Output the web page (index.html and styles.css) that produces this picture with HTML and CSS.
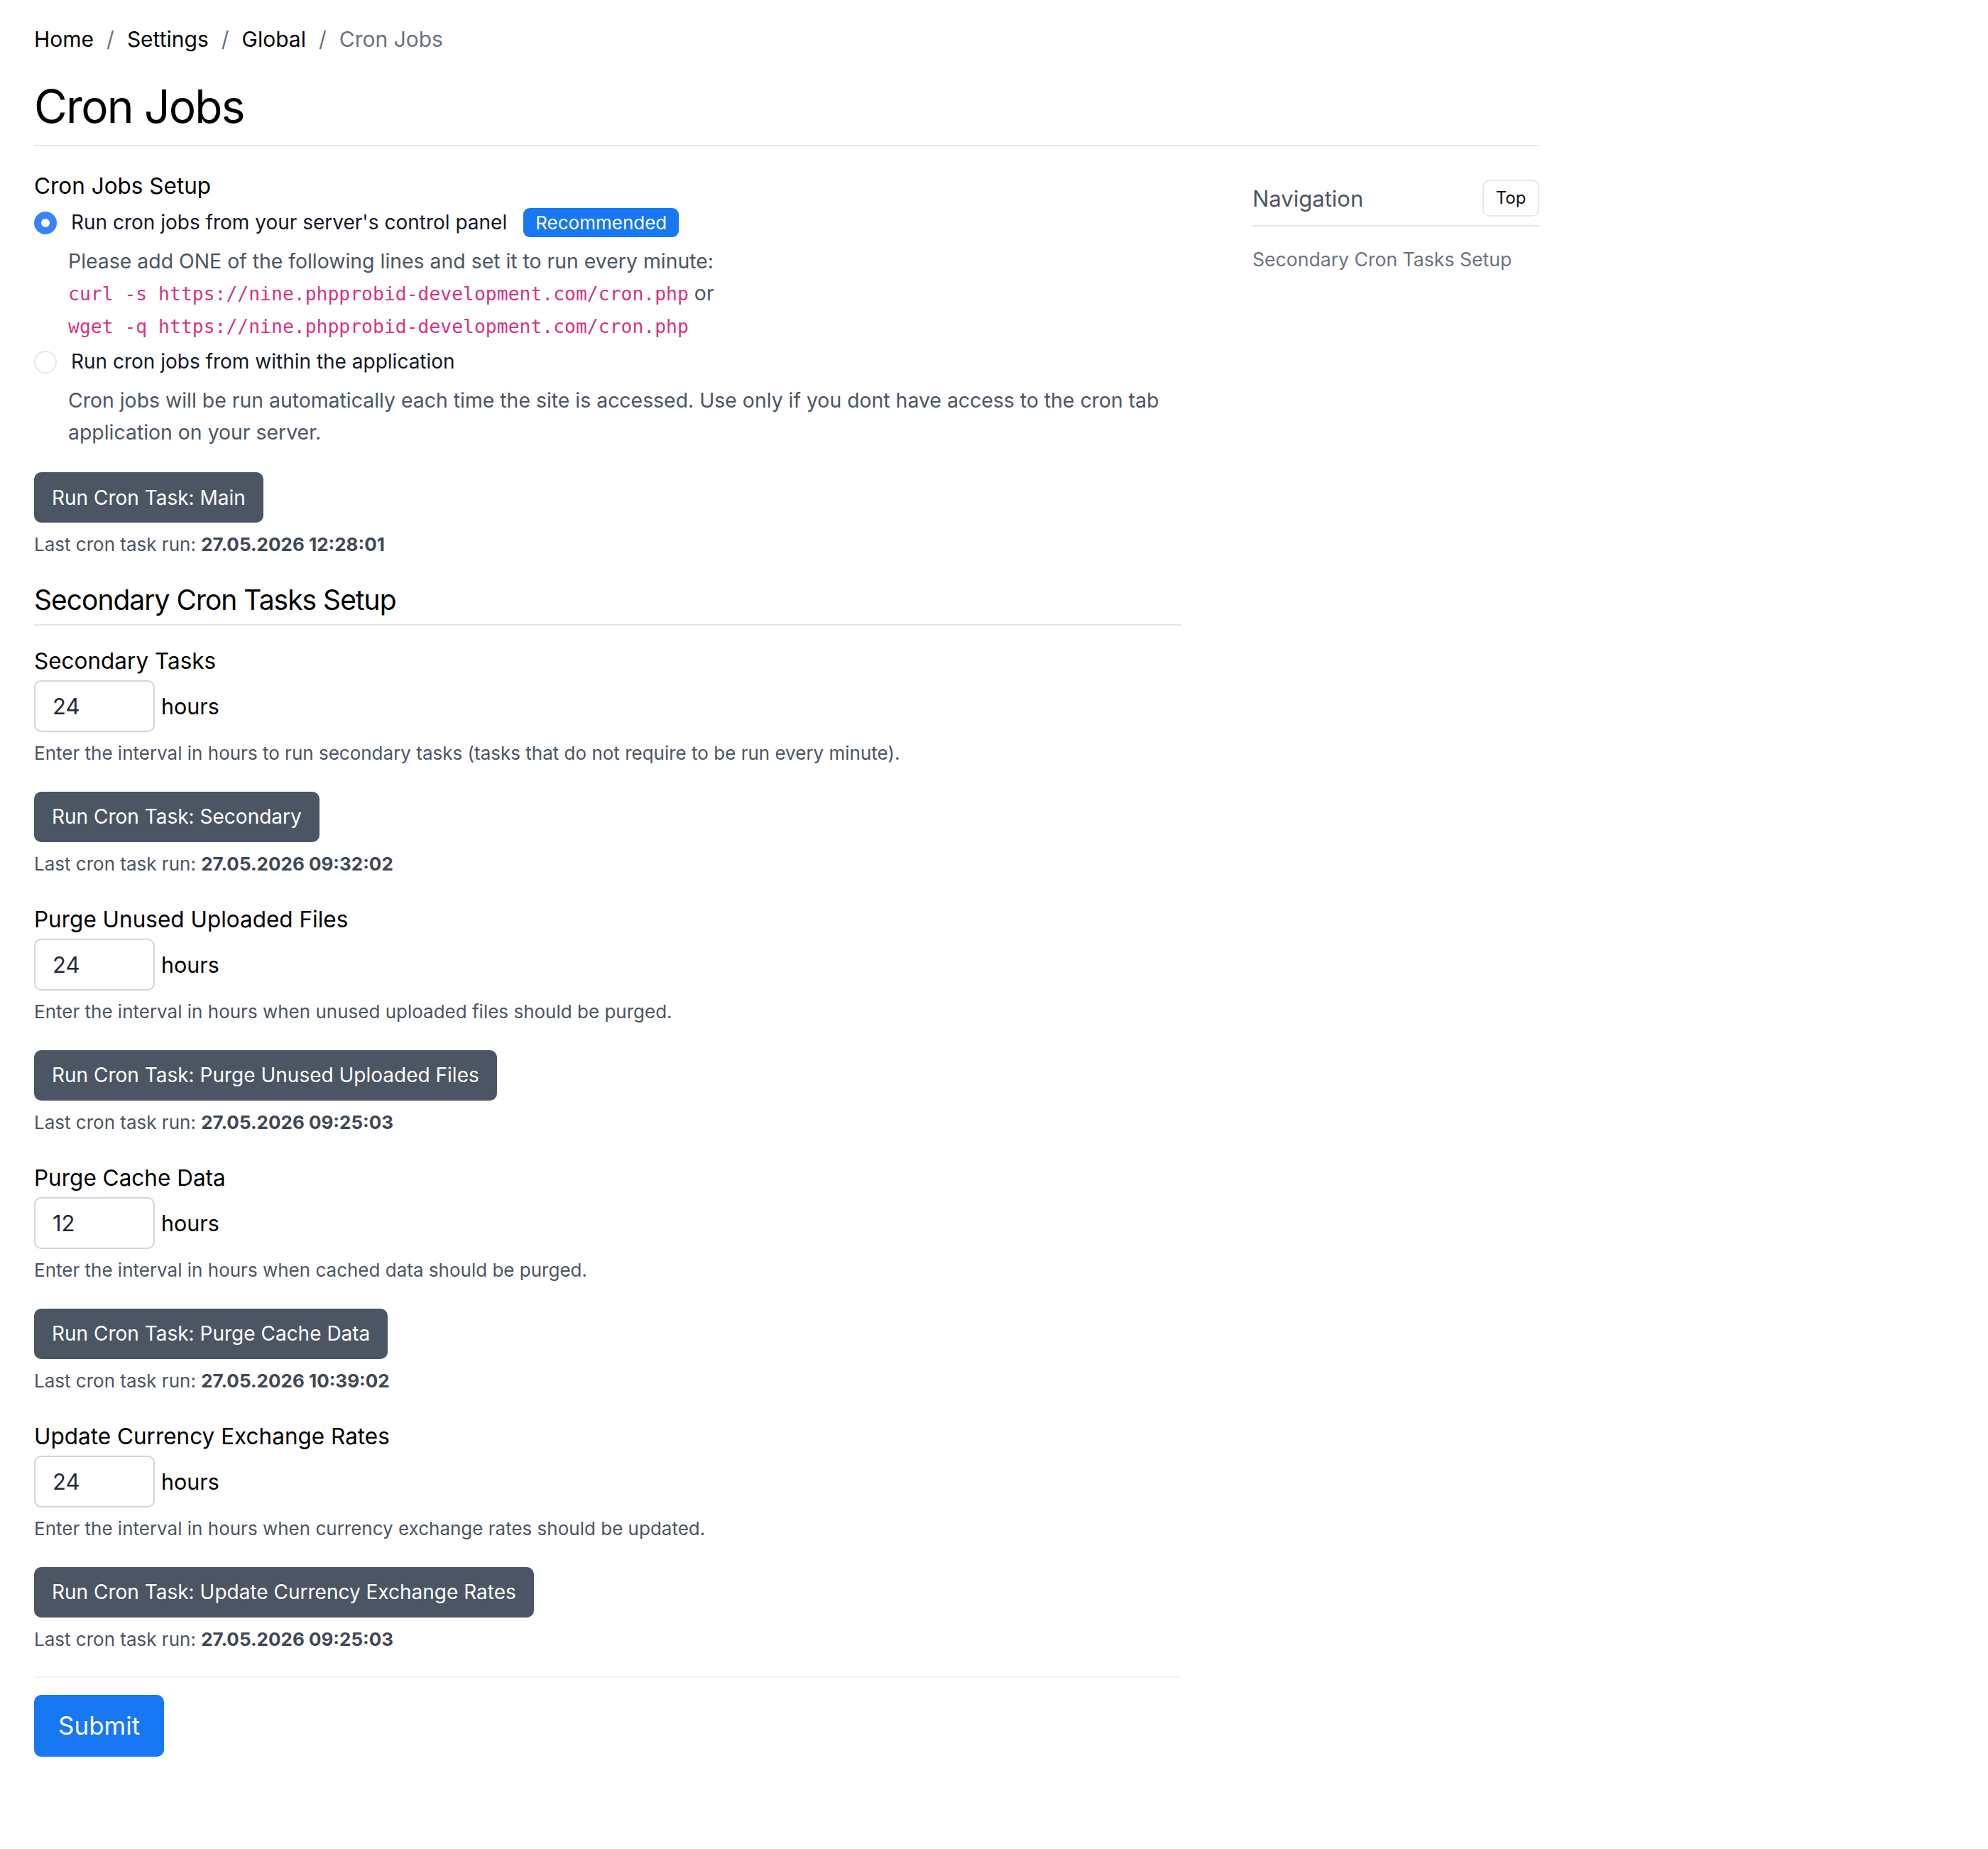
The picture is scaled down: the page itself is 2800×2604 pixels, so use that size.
FILE: index.html
```html
<!DOCTYPE html>
<html lang="en">
<head>
<meta charset="UTF-8">
<title>Cron Jobs</title>
<link rel="stylesheet" href="styles.css">
</head>
<body>
<div class="page">
    <nav class="crumbs">
        <a href="#">Home</a><span class="sep">/</span><a href="#">Settings</a><span class="sep">/</span><a href="#">Global</a><span class="sep">/</span><span class="current">Cron Jobs</span>
    </nav>
    <h1 class="title">Cron Jobs</h1>

    <div class="layout">
        <form class="main" action="#" method="post">
            <div class="group-title">Cron Jobs Setup</div>

            <label class="check">
                <input type="radio" name="cron_mode" value="server" checked>
                <span>Run cron jobs from your server's control panel</span>
                <span class="badge">Recommended</span>
            </label>
            <div class="check-help">
                <div>Please add ONE of the following lines and set it to run every minute:</div>
                <div><code>curl -s https://nine.phpprobid-development.com/cron.php</code> or</div>
                <div><code>wget -q https://nine.phpprobid-development.com/cron.php</code></div>
            </div>

            <label class="check">
                <input type="radio" name="cron_mode" value="app">
                <span>Run cron jobs from within the application</span>
            </label>
            <div class="check-help">
                Cron jobs will be run automatically each time the site is accessed. Use only if you dont have access to the cron tab application on your server.
            </div>

            <button type="button" class="btn-run first">Run Cron Task: Main</button>
            <div class="last-run">Last cron task run: <b>27.05.2026 12:28:01</b></div>

            <h4 class="section" id="secondary">Secondary Cron Tasks Setup</h4>

            <div class="task">
                <div class="task-label">Secondary Tasks</div>
                <div class="task-input"><input type="text" value="24"><span>hours</span></div>
                <div class="task-help">Enter the interval in hours to run secondary tasks (tasks that do not require to be run every minute).</div>
                <button type="button" class="btn-run">Run Cron Task: Secondary</button>
                <div class="last-run">Last cron task run: <b>27.05.2026 09:32:02</b></div>
            </div>

            <div class="task">
                <div class="task-label">Purge Unused Uploaded Files</div>
                <div class="task-input"><input type="text" value="24"><span>hours</span></div>
                <div class="task-help">Enter the interval in hours when unused uploaded files should be purged.</div>
                <button type="button" class="btn-run">Run Cron Task: Purge Unused Uploaded Files</button>
                <div class="last-run">Last cron task run: <b>27.05.2026 09:25:03</b></div>
            </div>

            <div class="task">
                <div class="task-label">Purge Cache Data</div>
                <div class="task-input"><input type="text" value="12"><span>hours</span></div>
                <div class="task-help">Enter the interval in hours when cached data should be purged.</div>
                <button type="button" class="btn-run">Run Cron Task: Purge Cache Data</button>
                <div class="last-run">Last cron task run: <b>27.05.2026 10:39:02</b></div>
            </div>

            <div class="task">
                <div class="task-label">Update Currency Exchange Rates</div>
                <div class="task-input"><input type="text" value="24"><span>hours</span></div>
                <div class="task-help">Enter the interval in hours when currency exchange rates should be updated.</div>
                <button type="button" class="btn-run">Run Cron Task: Update Currency Exchange Rates</button>
                <div class="last-run">Last cron task run: <b>27.05.2026 09:25:03</b></div>
            </div>

            <div class="actions">
                <button type="submit" class="btn-submit">Submit</button>
            </div>
        </form>

        <aside class="side">
            <div class="side-head">
                <span>Navigation</span>
                <a href="#" class="btn-top">Top</a>
            </div>
            <a href="#secondary" class="side-link">Secondary Cron Tasks Setup</a>
        </aside>
    </div>
</div>
</body>
</html>
```

FILE: styles.css
```css
body{margin:0;color:#111827;background:#fff;font-family:Inter,"Noto Sans",sans-serif;font-size:28px;line-height:45px;}
a{text-decoration:none;color:inherit;}

.page{width:2120px;padding:33px 0 60px 48px;}

/* breadcrumb */
.crumbs{display:flex;font-size:30px;line-height:45px;color:#000;}
.crumbs .sep{color:#6b7280;padding:0 18px;}
.crumbs .current{color:#6b7280;}

.title{margin:30px 0 0;padding-bottom:12px;border-bottom:2px solid #e5e7eb;font-size:64px;line-height:84px;letter-spacing:-1.8px;font-weight:400;color:#000;}

.layout{display:grid;grid-template-columns:1616px 404px;column-gap:100px;align-items:start;}

/* main form */
.group-title{margin-top:31px;font-size:31.5px;line-height:50px;color:#000;}

.check{display:flex;align-items:center;margin-top:4px;line-height:45px;}
.check input{appearance:none;-webkit-appearance:none;box-sizing:border-box;width:32px;height:32px;margin:0 20px 0 0;border:2px solid #e5e7eb;border-radius:50%;background:#fff;}
.check input:checked{border:10px solid #3b82f6;}
.badge{margin-left:23px;padding:0 17px;height:41px;line-height:41px;border-radius:9px;background:#1877f2;color:#fff;font-size:26px;}

.check-help{margin-top:9px;padding-left:48px;font-size:28.4px;color:#4b5563;}
.check-help + .check{margin-top:5px;}
.check-help code{font-family:"DejaVu Sans Mono",monospace;font-size:26.4px;color:#d63384;}

.btn-run{display:block;height:71px;padding:0 25px;border:0;border-radius:10px;background:#4b5563;color:#fff;font-family:inherit;font-size:28px;cursor:pointer;}
.btn-run.first{margin-top:34px;}

.last-run{margin-top:11px;font-size:26px;line-height:40px;color:#4b5563;}
.last-run b{font-weight:700;color:#404854;}

.section{margin:33px 0 0;padding-bottom:9px;border-bottom:2px solid #e5e7eb;font-size:39px;line-height:50px;letter-spacing:-1px;font-weight:400;color:#000;}

.task{margin-top:33.5px;}
.section + .task{margin-top:25px;}
.task-label{font-size:31.5px;line-height:50px;color:#000;}
.task-input{display:flex;align-items:center;margin-top:2px;}
.task-input input{box-sizing:border-box;width:170px;height:73px;padding:0 24px;border:2px solid #d1d5db;border-radius:10px;font-family:inherit;font-size:31px;color:#1f2937;}
.task-input span{margin-left:9px;font-size:30.5px;color:#000;}
.task-help{margin-top:9.5px;font-size:26px;line-height:40px;color:#4b5563;}
.task .btn-run{margin-top:34px;}

.actions{margin-top:32px;padding-top:24px;border-top:2px solid #f0f1f3;}
.btn-submit{height:87px;padding:0 34px;border:0;border-radius:10px;background:#1877f2;color:#fff;font-family:inherit;font-size:35px;cursor:pointer;}

/* side navigation */
.side{margin-top:47px;}
.side-head{display:flex;justify-content:space-between;align-items:center;padding-bottom:12px;border-bottom:2px solid #e5e7eb;font-size:31px;color:#4b5563;}
.btn-top{box-sizing:border-box;width:80px;height:52px;line-height:48px;text-align:center;border:2px solid #e5e7eb;border-radius:10px;font-size:24px;color:#111;}
.side-link{display:block;margin-top:24px;font-size:26.6px;color:#6b7280;}
```
